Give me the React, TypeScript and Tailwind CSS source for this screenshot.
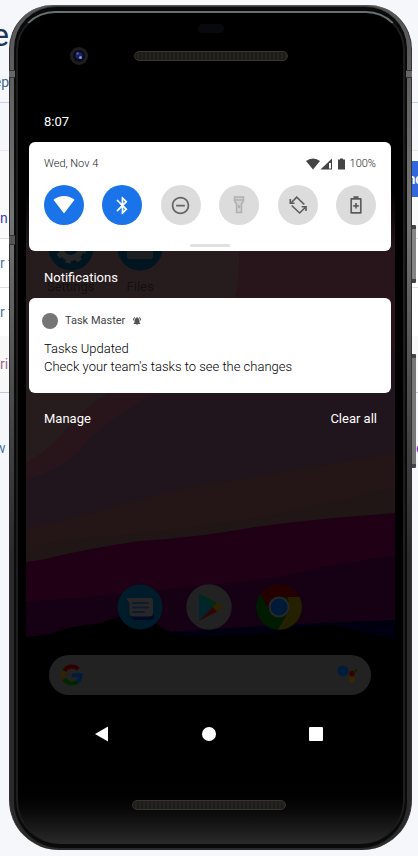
import type { ReactNode } from "react";
import { MdBluetooth, MdNotificationsActive, MdRemoveCircleOutline } from "react-icons/md";

function BackdropRow({ className, left, right }: { className: string; left?: ReactNode; right?: ReactNode }) {
  return (
    <div className={`flex shrink-0 items-center justify-between overflow-hidden whitespace-nowrap ${className}`}>
      <div className="flex w-[9px] justify-end">{left}</div>
      <div className="flex w-[6px] justify-start">{right}</div>
    </div>
  );
}

function Backdrop() {
  return (
    <div className="[grid-area:1/1] flex min-w-0 flex-col overflow-hidden bg-[#f5f7fa] text-sm text-[#4a78b0]" aria-hidden="true">
      <BackdropRow className="h-[72px]" left={<span className="text-[32px] text-[#1d3557]">e</span>} />
      <BackdropRow className="h-[31px] items-start border-b border-[#c3d2e6]" left={<span className="text-[#4a6488]">ep</span>} />
      <BackdropRow className="h-[47px]" />
      <BackdropRow className="h-[11px] border-t border-[#e6e8eb] bg-[#fafafb]" />
      <BackdropRow
        className="h-9 bg-[#fafafb]"
        right={<span className="flex h-9 w-[6px] items-center justify-center bg-[#3367e0] font-bold text-white">nc</span>}
      />
      <BackdropRow className="h-[42px] border-b border-[#dcdee2] bg-[#fafafb]" left={<span className="w-[13px] text-[#4040b0]">n</span>} />
      <BackdropRow className="h-[49px] border-b border-[#dcdee2] bg-white" left={<span className="w-[9px]">r t</span>} />
      <BackdropRow className="h-12 bg-white" left={<span className="w-[9px]">r t</span>} />
      <BackdropRow className="h-[57px] border-b border-[#c4c6ca] bg-[#f8f8f9]" left={<span className="w-[9px] text-[#a06a90]">rin</span>} />
      <BackdropRow
        className="h-[110px]"
        left={<span className="w-[14px]">w a</span>}
        right={<span className="pl-1 text-[#6a3fd0]">e</span>}
      />
    </div>
  );
}

function Speaker() {
  return (
    <div className="h-[10px] w-[154px] rounded-full border border-[#34332f] bg-[repeating-linear-gradient(90deg,#1d1c18_0px,#1d1c18_2px,#24231e_2px,#24231e_4px)]" />
  );
}

function Wallpaper() {
  return (
    <svg className="[grid-area:1/1] h-full w-full" viewBox="26 94 369 664" preserveAspectRatio="none" aria-hidden="true">
      <defs>
        <linearGradient id="topFade" x1="0" y1="0" x2="0" y2="1">
          <stop offset="0" stopColor="#000" />
          <stop offset="1" stopColor="#000" stopOpacity="0" />
        </linearGradient>
      </defs>
      <rect x="26" y="94" width="369" height="664" fill="#000" />
      <rect x="26" y="190" width="369" height="568" fill="#271c1d" />
      <path d="M218 190H395V500H26V462Q44 455 65 430Q84 408 105 395L190 340L234 300Q240 280 239 250Z" fill="#28151c" />
      <path d="M26 480Q60 470 80 450Q100 424 150 396Q260 365 395 350V540H26Z" fill="#21151d" />
      <path d="M26 528Q70 520 120 505Q180 487 270 475Q330 464 395 453V580H26Z" fill="#241616" />
      <path d="M26 547Q70 539 120 536Q240 524 320 505L395 488V580H26Z" fill="#1f1615" />
      <path d="M26 562L40 560Q90 548 140 541Q200 537 250 528Q290 521 395 513V650H26Z" fill="#1f0014" />
      <path d="M26 602Q90 597 200 586Q270 580 310 570Q350 562 395 556V650H26Z" fill="#160014" />
      <path d="M165 632Q240 627 320 623L395 620V650H165Z" fill="#000010" />
      <path d="M26 637L50 634L72 627L100 623L118 617L140 613L162 628Q176 636 200 637L260 634L300 628L325 625L342 627L360 632L395 639V758H26Z" fill="#000" />
      <rect x="26" y="189" width="369" height="62" fill="url(#topFade)" />
    </svg>
  );
}

function AppIcon({ children }: { children: ReactNode }) {
  return (
    <svg className="h-[46px] w-[46px]" viewBox="0 0 46 46" aria-hidden="true">
      {children}
    </svg>
  );
}

function SettingsIcon() {
  return (
    <AppIcon>
      <circle cx="23" cy="23" r="22.5" fill="#001520" />
      <circle cx="23" cy="23" r="10" fill="none" stroke="#262626" strokeWidth="6" />
      <circle cx="23" cy="23" r="13.500" fill="none" stroke="#262626" strokeWidth="4" strokeDasharray="5.300 5.300" />
    </AppIcon>
  );
}

function FilesIcon() {
  return (
    <AppIcon>
      <circle cx="23" cy="23" r="22.5" fill="#001520" />
      <path d="M10 12h10l3 3h13v17a2 2 0 0 1-2 2H12a2 2 0 0 1-2-2z" fill="#1c1e1f" />
    </AppIcon>
  );
}

function MessagesIcon() {
  return (
    <AppIcon>
      <circle cx="23" cy="23" r="22.5" fill="#001c2a" />
      <path d="M13 30l2 4q1 2 3 2h16q3 0 3-3v-4z" fill="#000a25" />
      <path d="M9 14H33a3 3 0 0 1 3 3V29.500a3 3 0 0 1-3 3H15.500a3 3 0 0 1-3-3V19z" fill="#272727" />
      <path d="M16 19H31M16 23.500H31M16 28H27" stroke="#101a2c" strokeWidth="2" strokeLinecap="round" />
    </AppIcon>
  );
}

function PlayIcon() {
  return (
    <AppIcon>
      <circle cx="23" cy="23" r="22.700" fill="#222" />
      <path d="M13 9.500V37L26.500 23z" fill="#00262c" />
      <path d="M13 9.500L31 19L26.500 23.500z" fill="#002a17" />
      <path d="M31 18.500L37 23L31 27.500L26.500 23z" fill="#302200" />
      <path d="M13 37L31 27.500L26.500 23z" fill="#300507" />
    </AppIcon>
  );
}

function ChromeIcon() {
  return (
    <AppIcon>
      <circle cx="23" cy="23" r="22.700" fill="#001c00" />
      <path d="M4.500 10A22.700 22.700 0 0 1 43.500 13H23L13.500 27z" fill="#240000" />
      <path d="M43.500 13A22.700 22.700 0 0 1 22 45.700L33 27L32 13z" fill="#252000" />
      <circle cx="23" cy="23" r="10.500" fill="#272727" />
      <circle cx="23" cy="23" r="8.500" fill="#001a38" />
    </AppIcon>
  );
}

function GoogleMark() {
  return (
    <svg className="h-[22px] w-[22px]" viewBox="0 0 22 22" fill="none" strokeWidth="4" aria-hidden="true">
      <path d="M17.200 5.200A8.600 8.600 0 0 0 3.400 7" stroke="#300000" />
      <path d="M3.400 7A8.600 8.600 0 0 0 3.400 15" stroke="#302300" />
      <path d="M3.400 15A8.600 8.600 0 0 0 16.500 17.600" stroke="#002600" />
      <path d="M16.500 17.600A8.600 8.600 0 0 0 19.600 11.200H11" stroke="#001c3d" />
    </svg>
  );
}

function AssistantMark() {
  return (
    <svg className="h-[22px] w-[22px]" viewBox="0 0 22 22" aria-hidden="true">
      <circle cx="6" cy="7" r="5.400" fill="#001c3d" />
      <circle cx="15" cy="9.500" r="2.700" fill="#370000" />
      <circle cx="19" cy="6.500" r="1.500" fill="#002b00" />
      <circle cx="15" cy="16" r="3.100" fill="#352700" />
    </svg>
  );
}

function HomeScreen() {
  return (
    <div className="[grid-area:1/1] flex flex-col pt-[131px] pb-[63px]">
      <div className="grid grid-cols-5 justify-items-center pr-3 pl-[10px] text-[13px] leading-4 text-[#111]">
        <div className="flex flex-col items-center gap-2">
          <SettingsIcon />
          <span>Settings</span>
        </div>
        <div className="flex flex-col items-center gap-2">
          <FilesIcon />
          <span>Files</span>
        </div>
      </div>
      <div className="mt-[289px] grid grid-cols-5 justify-items-center pr-3 pl-[10px]">
        <div className="col-start-2">
          <MessagesIcon />
        </div>
        <PlayIcon />
        <ChromeIcon />
      </div>
      <div className="mr-6 ml-[23px] mt-[25px] flex h-10 items-center justify-between rounded-full bg-[#222] px-3">
        <GoogleMark />
        <AssistantMark />
      </div>
    </div>
  );
}

function WifiIcon() {
  return (
    <svg className="h-[22px] w-[22px]" viewBox="0 0 22 22" fill="currentColor" aria-hidden="true">
      <path d="M11 19.500L0.500 5.800Q5 2 11 2T21.500 5.800z" />
    </svg>
  );
}

function FlashlightIcon() {
  return (
    <svg className="h-5 w-5" viewBox="0 0 20 20" fill="none" stroke="currentColor" strokeWidth="1.500" aria-hidden="true">
      <path d="M5.500 2H14.500V6L12.500 9V17.500H7.500V9L5.500 6z" fill="#cfcfcf" />
      <path d="M5.500 5H14.500" />
      <circle cx="10" cy="11.500" r="0.800" fill="currentColor" />
    </svg>
  );
}

function RotateIcon() {
  return (
    <svg className="h-5 w-5" viewBox="0 0 20 20" fill="none" stroke="currentColor" strokeWidth="1.600" aria-hidden="true">
      <path d="M3.500 7.500L8.700 2.200L16.300 9.500M2.300 4V8.300H6.500" />
      <path d="M3.700 10.500L11.600 18L17 12.700M13.700 11.700H18V16" />
    </svg>
  );
}

function BatterySaverIcon() {
  return (
    <svg className="h-5 w-5" viewBox="0 0 20 20" fill="none" stroke="currentColor" strokeWidth="1.700" aria-hidden="true">
      <path d="M5.200 3.800H14.800V17.800H5.200z" strokeLinejoin="round" />
      <path d="M7.500 2.200H12.500" strokeWidth="2" />
      <path d="M10 8V13.600M7.200 10.800H12.800" />
    </svg>
  );
}

const tiles = [
  { label: "Wi-Fi", tone: "bg-[#1a73e8] text-white", on: true, icon: <WifiIcon /> },
  { label: "Bluetooth", tone: "bg-[#1a73e8] text-white", on: true, icon: <MdBluetooth size={21} /> },
  { label: "Do Not Disturb", tone: "bg-[#dcdcdc] text-[#666]", on: false, icon: <MdRemoveCircleOutline size={21} /> },
  { label: "Flashlight", tone: "bg-[#dcdcdc] text-[#b0b0b0]", on: false, icon: <FlashlightIcon /> },
  { label: "Auto-rotate", tone: "bg-[#dcdcdc] text-[#5c5c5c]", on: false, icon: <RotateIcon /> },
  { label: "Battery Saver", tone: "bg-[#dcdcdc] text-[#5c5c5c]", on: false, icon: <BatterySaverIcon /> },
];

function StatusIcons() {
  return (
    <svg className="h-3 w-10" viewBox="0 0 40 12" fill="#444" aria-hidden="true">
      <path d="M7 11.500L0 3Q3 0.500 7 0.500T14 3z" />
      <path d="M14.500 11.500L26 0.500V11.500z" />
      <path d="M23 5H25V10.500H23z" fill="#fff" />
      <path d="M34 0.500H37V1.500H39V11.500H32V1.500H34z" />
    </svg>
  );
}

function QuickSettings() {
  return (
    <section className="mr-1 ml-[3px] flex flex-col rounded-md bg-white px-[15px] pt-[14px] pb-1">
      <div className="flex h-4 items-center justify-between text-[11px] font-light text-[#222]">
        <span>Wed, Nov 4</span>
        <span className="flex items-center gap-1">
          <StatusIcons />
          100%
        </span>
      </div>
      <div className="mt-[13px] flex justify-between">
        {tiles.map((tile) => (
          <button
            key={tile.label}
            type="button"
            aria-label={tile.label}
            aria-pressed={tile.on}
            className={`flex h-10 w-10 items-center justify-center rounded-full ${tile.tone}`}
          >
            {tile.icon}
          </button>
        ))}
      </div>
      <div className="mt-[19px] h-[3px] w-10 self-center rounded-full bg-[#e0e0e0]" />
    </section>
  );
}

function Notification() {
  return (
    <article className="mr-1 ml-[3px] rounded-md bg-white px-[15px] pt-[15px] pb-[17px]">
      <header className="-ml-0.5 flex h-4 items-center gap-[7px] text-[11px] text-[#444]">
        <span className="h-4 w-4 rounded-full bg-[#757575]" />
        <span>Task Master</span>
        <MdNotificationsActive size={10} color="#555" />
      </header>
      <h2 className="mt-[11px] text-[13px] leading-[18px] font-light text-[#000]">Tasks Updated</h2>
      <p className="text-[13px] leading-[18px] font-light text-[#000]">Check your team's tasks to see the changes</p>
    </article>
  );
}

function NavBar() {
  return (
    <nav className="mt-auto grid h-12 grid-cols-3 pr-[26px] pl-[23px] text-white">
      <button type="button" aria-label="Back" className="flex items-center justify-center">
        <svg className="h-4 w-4" viewBox="0 0 16 16" fill="currentColor" aria-hidden="true">
          <path d="M1 8L14 0.500V15.500z" />
        </svg>
      </button>
      <button type="button" aria-label="Home" className="flex items-center justify-center">
        <span className="h-[14px] w-[14px] rounded-full bg-white" />
      </button>
      <button type="button" aria-label="Overview" className="flex items-center justify-center">
        <span className="h-[14px] w-[14px] rounded-[1px] bg-white" />
      </button>
    </nav>
  );
}

function NotificationShade() {
  return (
    <div className="[grid-area:1/1] flex flex-col text-[13px] leading-5 text-white">
      <div className="px-[18px] pt-[18px] pb-[10px]">8:07</div>
      <QuickSettings />
      <h1 className="px-[18px] pt-[17px] pb-[10px]">Notifications</h1>
      <Notification />
      <div className="flex justify-between px-[18px] pt-4">
        <button type="button">Manage</button>
        <button type="button">Clear all</button>
      </div>
      <NavBar />
    </div>
  );
}

function Phone() {
  return (
    <div className="[grid-area:1/1] relative mt-[5px] mr-[6px] mb-[6px] ml-[9px] self-start">
      <div className="absolute top-[220px] -right-1 h-[58px] w-2 rounded-[1px] border-y-4 border-[#444] bg-[#858585]" />
      <div className="absolute top-[349px] -right-1 h-[114px] w-2 rounded-[1px] border-y-4 border-[#444] bg-[#777]" />
      <div className="relative rounded-t-[44px] rounded-b-[50px] border-x border-[#333] bg-linear-to-b from-[#555] via-[#747474] via-25% to-[#2a2a2a] to-65% px-1 pt-px pb-[2px]">
        <div className="rounded-t-[42px] rounded-b-[47px] border-t border-[#777]/40 bg-[#0a0a0a] px-[2px] pt-[4px] pb-1">
          <div className="rounded-t-[39px] rounded-b-[44px] border-x-2 border-t-2 border-x-[#1e1e1e] border-t-[#657072] bg-linear-to-b from-black from-92% to-[#2a2a2a] px-2">
            <div className="flex h-[81px] flex-col pt-[11px]">
              <div className="h-[9px] w-[26px] self-center rounded-full bg-[#07090f]" />
              <div className="mt-[13px] grid h-5 grid-cols-[1fr_154px_1fr] items-center">
                <div className="pl-11">
                  <svg className="h-[18px] w-[18px]" viewBox="0 0 18 18" aria-hidden="true">
                    <circle cx="9" cy="9" r="9" fill="#1e1e20" />
                    <circle cx="9" cy="9" r="6" fill="#0a0b18" />
                    <circle cx="9" cy="8.500" r="3.500" fill="#1a2460" />
                    <circle cx="7.500" cy="6.500" r="1.200" fill="#4a5cc0" />
                    <circle cx="10.500" cy="10.500" r="1.500" fill="#7f93f0" />
                  </svg>
                </div>
                <Speaker />
              </div>
            </div>
            <main className="grid">
              <Wallpaper />
              <HomeScreen />
              <NotificationShade />
            </main>
            <div className="flex h-[86px] justify-center pt-[42px] pr-1">
              <Speaker />
            </div>
          </div>
        </div>
      </div>
      <div className="absolute top-[65px] left-0 h-2 w-[6px] border-y border-[#333] bg-[#666]" />
      <div className="absolute top-[65px] right-0 h-2 w-[6px] border-y border-[#333] bg-[#666]" />
      <div className="absolute top-[230px] left-0 h-[10px] w-[6px] border-y border-[#333] bg-[#555]" />
    </div>
  );
}

export default function App() {
  return (
    <div className="grid min-h-screen grid-cols-1 overflow-hidden bg-[#f5f7fa] [font-family:Roboto,'Liberation_Sans',sans-serif]">
      <Backdrop />
      <Phone />
    </div>
  );
}
